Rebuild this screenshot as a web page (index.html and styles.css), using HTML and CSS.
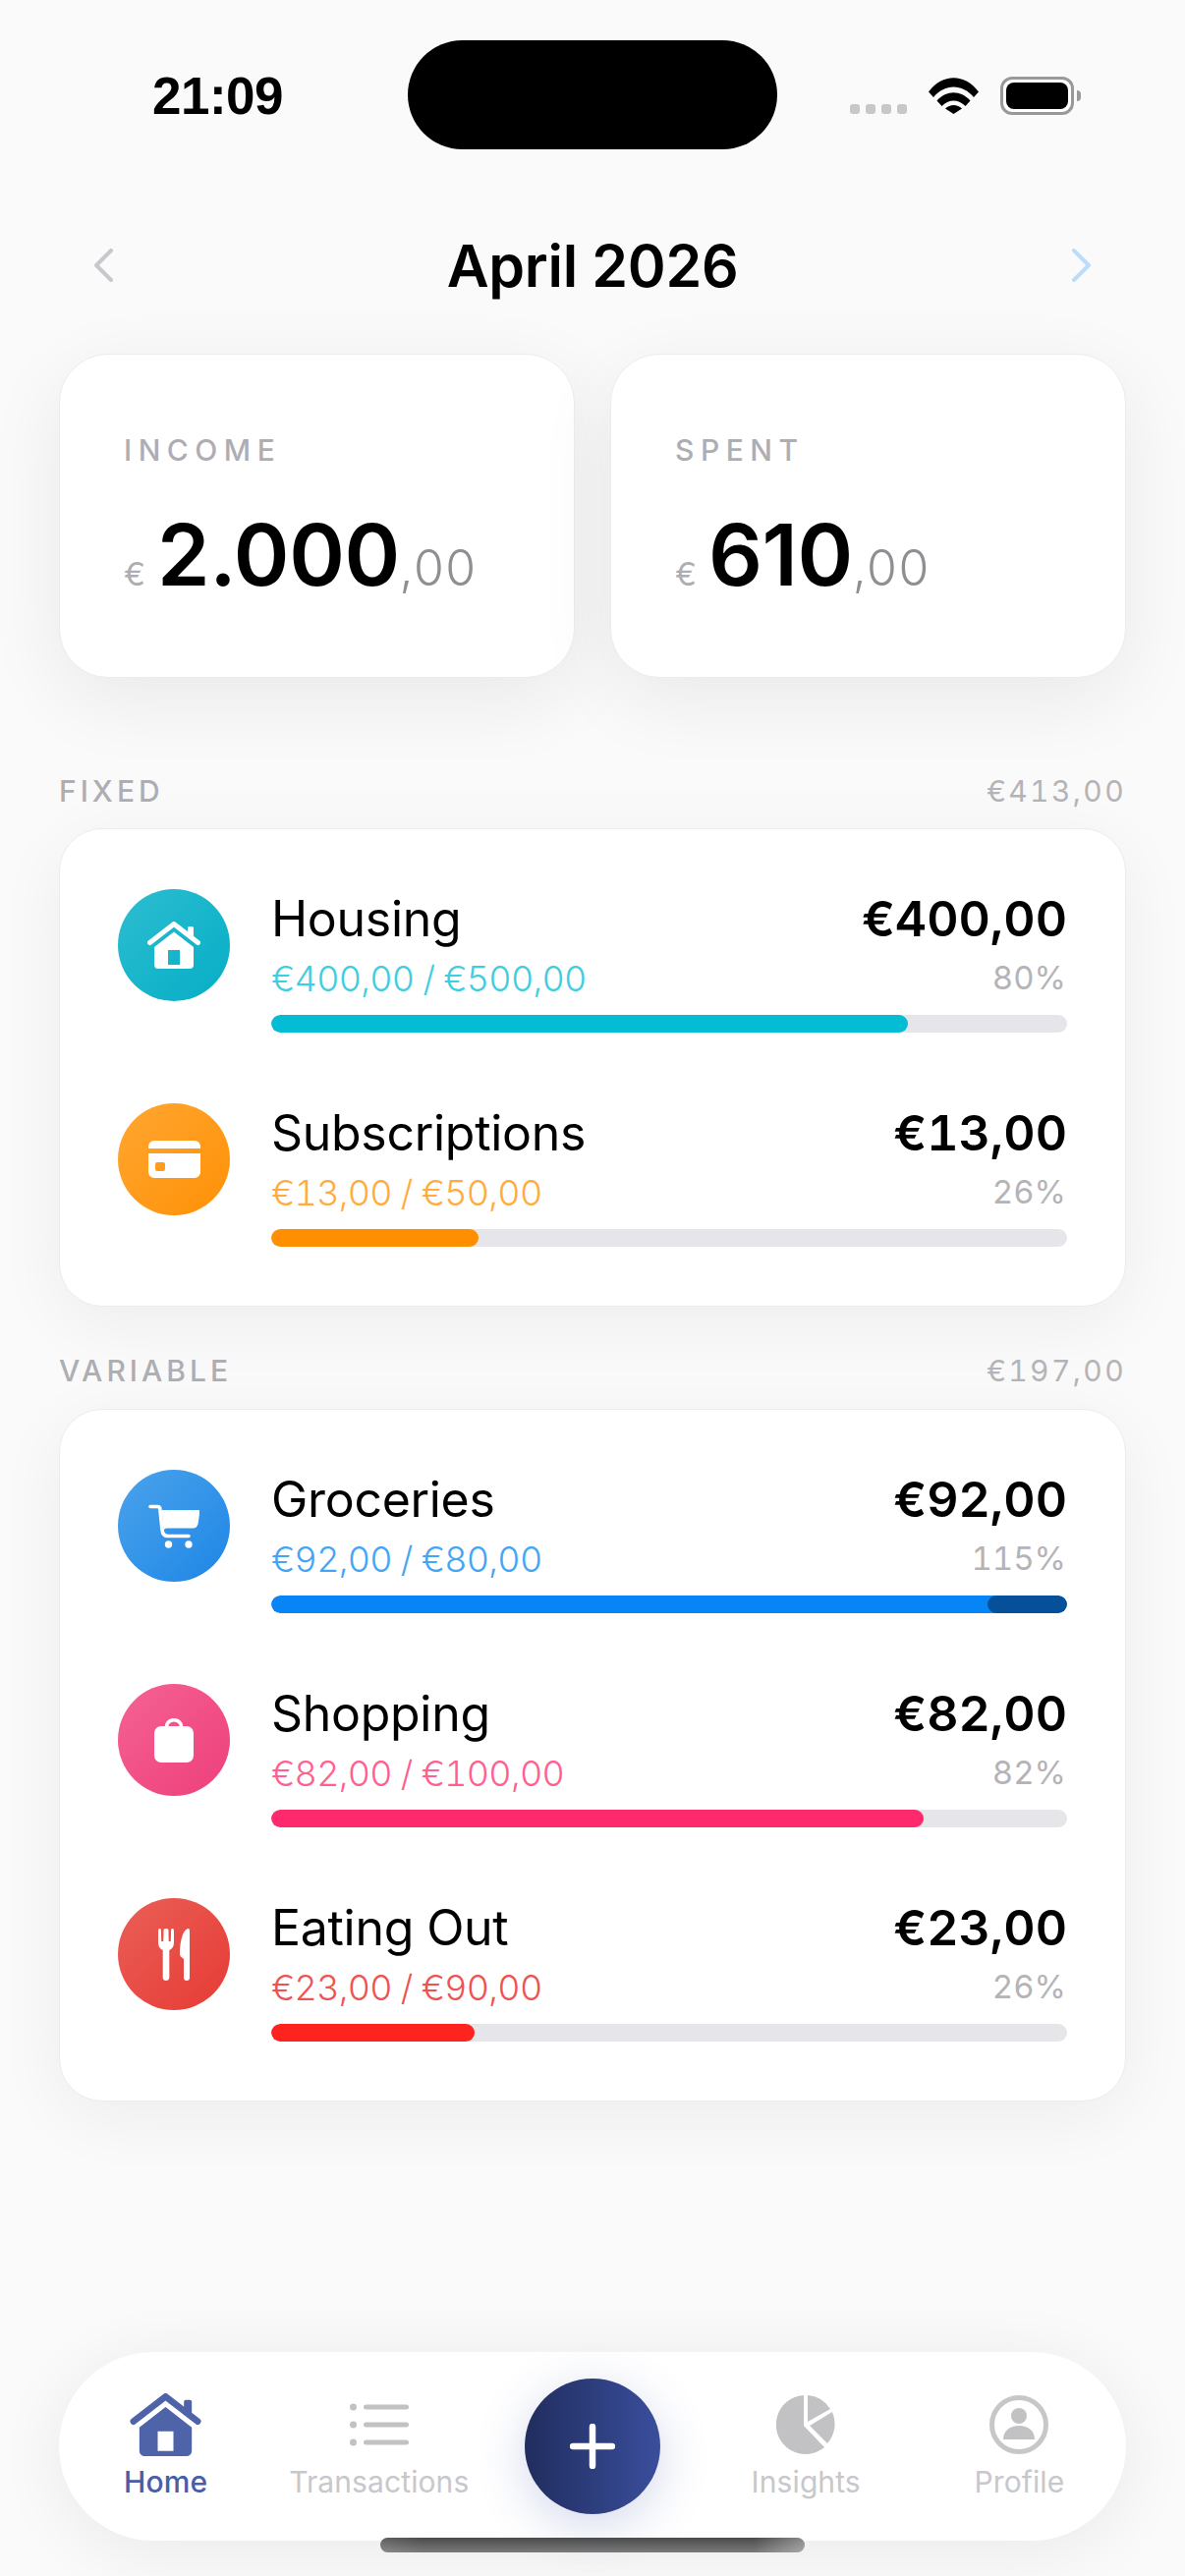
FILE: index.html
```html
<!DOCTYPE html>
<html>
<head>
    <meta charset="UTF-8">
    <title>Budget</title>
    <link rel="stylesheet" href="styles.css">
</head>
<body>
<div class="screen">
    <svg class="defs" width="0" height="0">
        <defs>
            <g id="house">
                <rect x="71" y="38" width="6" height="12" rx="1.500"/>
                <path class="roof" d="M32.500 54.500 L57 35.500 L81.500 54.500"/>
                <path fill-rule="evenodd" d="M37 59 L57 43.500 L77 59 V77 a4 4 0 0 1-4 4 H41 a4 4 0 0 1-4-4 Z M51 62 V77 H63 V62 Z"/>
            </g>
        </defs>
    </svg>

    <!-- status bar -->
    <div class="status">
        <div class="time">21:09</div>
        <div class="island"></div>
        <div class="status-icons">
            <div class="signal"><span></span><span></span><span></span><span></span></div>
            <svg class="wifi" viewBox="0 0 51 37">
                <path d="M0 14.5 C14 -4.5 37 -4.5 51 14.5 L46 20 C34.5 6 16.500 6 5 20 Z"/>
                <path d="M8.500 23.500 C18 12.500 33 12.500 42.500 23.500 L37.500 29 C31 21.500 20 21.500 13.500 29 Z"/>
                <path d="M17 31.500 C22 26.800 29 26.800 34 31.500 L25.500 37 Z"/>
            </svg>
            <div class="battery"><div class="battery-fill"></div></div>
            <div class="battery-nub"></div>
        </div>
    </div>

    <!-- month switcher -->
    <div class="month">
        <svg class="chev" viewBox="0 0 19 34"><path d="M17 2 L2 17 L17 32" stroke="#c7c7cc"/></svg>
        <h1>April 2026</h1>
        <svg class="chev" viewBox="0 0 19 34"><path d="M2 2 L17 17 L2 32" stroke="#bcdcfb"/></svg>
    </div>

    <!-- totals -->
    <div class="totals">
        <div class="total-card">
            <div class="total-label">INCOME</div>
            <div class="total-value"><span class="cur">€</span><span class="big">2.000</span><span class="cents">,00</span></div>
        </div>
        <div class="total-card">
            <div class="total-label">SPENT</div>
            <div class="total-value"><span class="cur">€</span><span class="big">610</span><span class="cents">,00</span></div>
        </div>
    </div>

    <div class="section-head first">
        <span class="section-name">FIXED</span>
        <span class="section-sum">€413,00</span>
    </div>
    <div class="list-card">
        <div class="row">
            <div class="circle teal">
                <svg class="ic-house" viewBox="30 33 54 48"><use href="#house"/></svg>
            </div>
            <div class="row-body">
                <div class="line-top"><span class="name">Housing</span><span class="amount">€400,00</span></div>
                <div class="line-sub"><span class="t-teal">€400,00 / €500,00</span><span class="pct">80%</span></div>
                <div class="bar"><div class="fill f-teal" style="width:80%"></div></div>
            </div>
        </div>
        <div class="row">
            <div class="circle orange">
                <svg class="ic-card" viewBox="0 0 53 38">
                    <path d="M0 8 V6 a6 6 0 0 1 6-6 H47 a6 6 0 0 1 6 6 V8 Z"/>
                    <path fill-rule="evenodd" d="M0 13 H53 V32 a6 6 0 0 1-6 6 H6 a6 6 0 0 1-6-6 Z M9 22 a2 2 0 0 0-2 2 V29 a2 2 0 0 0 2 2 H15 a2 2 0 0 0 2-2 V24 a2 2 0 0 0-2-2 Z"/>
                </svg>
            </div>
            <div class="row-body">
                <div class="line-top"><span class="name">Subscriptions</span><span class="amount">€13,00</span></div>
                <div class="line-sub"><span class="t-orange">€13,00 / €50,00</span><span class="pct">26%</span></div>
                <div class="bar"><div class="fill f-orange" style="width:26%"></div></div>
            </div>
        </div>
    </div>

    <div class="section-head">
        <span class="section-name">VARIABLE</span>
        <span class="section-sum">€197,00</span>
    </div>
    <div class="list-card">
        <div class="row">
            <div class="circle blue">
                <svg class="ic-cart" viewBox="0 0 52 45">
                    <path class="cart-line" d="M2 2.500 H9.500 Q11.500 2.500 11.800 4.500 L14 26 Q14.500 32.500 20 32.500 H41"/>
                    <path d="M13.500 6 H51 Q52.500 6 52.300 7.500 L50.800 19 Q50 24.500 45 24.500 H19 Q16 24.500 15.600 27 Z"/>
                    <circle cx="20.500" cy="41" r="3.700"/>
                    <circle cx="41" cy="41" r="3.700"/>
                </svg>
            </div>
            <div class="row-body">
                <div class="line-top"><span class="name">Groceries</span><span class="amount">€92,00</span></div>
                <div class="line-sub"><span class="t-blue">€92,00 / €80,00</span><span class="pct">115%</span></div>
                <div class="bar"><div class="fill f-blue" style="width:100%"><div class="over" style="width:10%"></div></div></div>
            </div>
        </div>
        <div class="row">
            <div class="circle pink">
                <svg class="ic-bag" viewBox="0 0 40 45">
                    <path class="bag-handle" d="M12.500 10 V8.500 a7.500 6.800 0 0 1 15 0 V10"/>
                    <rect x="0" y="8" width="40" height="37" rx="7"/>
                </svg>
            </div>
            <div class="row-body">
                <div class="line-top"><span class="name">Shopping</span><span class="amount">€82,00</span></div>
                <div class="line-sub"><span class="t-pink">€82,00 / €100,00</span><span class="pct">82%</span></div>
                <div class="bar"><div class="fill f-pink" style="width:82%"></div></div>
            </div>
        </div>
        <div class="row">
            <div class="circle red">
                <svg class="ic-food" viewBox="0 0 32 53">
                    <path d="M1 0 Q2.300 -.5 2.800 1 L3.200 13 H5.300 L5.600 1 Q6 0 8 0 Q10 0 10.400 1 L10.700 13 H12.800 L13.200 1 Q13.700 -.5 15 0 Q15.800 .3 16 2 L16 14 Q16 20 11.300 22 V50 Q11 53 8 53 Q5 53 4.700 50 V22 Q0 20 0 14 L0 2 Q.2 .3 1 0 Z"/>
                    <path d="M32 2 V50 Q32 53 29 53 Q26 53 26 50 V31 L23 28.500 Q22 27.500 22 26 C22 14 25 1 30.500 0 Q32 0 32 2 Z"/>
                </svg>
            </div>
            <div class="row-body">
                <div class="line-top"><span class="name">Eating Out</span><span class="amount">€23,00</span></div>
                <div class="line-sub"><span class="t-red">€23,00 / €90,00</span><span class="pct">26%</span></div>
                <div class="bar"><div class="fill f-red" style="width:25.500%"></div></div>
            </div>
        </div>
    </div>

    <!-- tab bar -->
    <nav class="tabbar">
        <div class="tab active">
            <svg class="tab-icon" viewBox="30 33 54 48"><use href="#house"/></svg>
            <span>Home</span>
        </div>
        <div class="tab">
            <svg class="tab-icon" viewBox="0 0 60 64">
                <circle cx="3.500" cy="14" r="3.500"/><circle cx="3.500" cy="32" r="3.500"/><circle cx="3.500" cy="50" r="3.500"/>
                <rect x="14" y="11.500" width="46" height="5" rx="2.500"/><rect x="14" y="29.500" width="46" height="5" rx="2.500"/><rect x="14" y="47.500" width="46" height="5" rx="2.500"/>
            </svg>
            <span>Transactions</span>
        </div>
        <div class="tab-add">
            <div class="fab">
                <svg class="plus" viewBox="0 0 46 46"><path d="M23 3 V43 M3 23 H43"/></svg>
            </div>
        </div>
        <div class="tab">
            <svg class="tab-icon" viewBox="0 -2 60 64">
                <path d="M28 0 A30 30 0 1 0 49 53 L28 31 Z"/>
                <path d="M32 0 V27 L55 14 A30 30 0 0 0 32 0 Z"/>
                <path d="M34 31 L57 17 A30 30 0 0 1 52 49 Z"/>
            </svg>
            <span>Insights</span>
        </div>
        <div class="tab">
            <svg class="tab-icon" viewBox="0 -2 60 64">
                <circle class="ring" cx="30" cy="30" r="27.500"/>
                <circle cx="30" cy="21" r="8"/>
                <path d="M14 45 C14 36 21 31 30 31 C39 31 46 36 46 45 Z"/>
            </svg>
            <span>Profile</span>
        </div>
    </nav>

    <div class="home-indicator"></div>
</div>
</body>
</html>
```

FILE: styles.css
```css
* {
    box-sizing: border-box;
}
html, body {
    margin: 0;
    padding: 0;
}
body {
    background-color: #fafafa;
    font-family: Inter, "Noto Sans", sans-serif;
    font-variant-numeric: tabular-nums;
    color: #000;
}
.screen {
    position: relative;
    width: 1206px;
    height: 2622px;
    overflow: hidden;
    display: flex;
    flex-direction: column;
    padding: 41px 60px 36px;
}
.defs {
    position: absolute;
}

/* status bar */
.status {
    display: grid;
    grid-template-columns: 1fr 376px 1fr;
    grid-template-rows: 111px;
    margin: 0 -5px;
    height: 111px;
}
.time {
    font-family: "Liberation Sans", Arial, sans-serif;
    font-size: 53px;
    font-weight: 700;
    line-height: 114px;
    height: 111px;
    padding-left: 100px;
    letter-spacing: -.5px;
}
.island {
    background-color: #000;
    border-radius: 56px;
}
.status-icons {
    display: flex;
    align-items: flex-start;
    position: relative;
    padding-left: 74px;
}
.signal {
    display: flex;
    gap: 6px;
    margin-top: 65px;
    width: 80px;
}
.signal span {
    width: 10px;
    height: 10px;
    border-radius: 3px;
    background-color: #c7c7c9;
}
.wifi {
    width: 51px;
    height: 37px;
    margin-top: 38px;
    margin-left: 0;
    fill: #000;
}
.battery {
    width: 75px;
    height: 39px;
    margin-top: 37px;
    margin-left: 22px;
    border: 3px solid #999;
    border-radius: 12px;
    padding: 3px;
    background-color: #fff;
}
.battery-fill {
    height: 100%;
    background-color: #000;
    border-radius: 8px;
}
.battery-nub {
    width: 4px;
    height: 11px;
    margin-top: 51px;
    margin-left: 3px;
    background-color: #999;
    border-radius: 0 4px 4px 0;
}

/* month */
.month {
    display: flex;
    justify-content: space-between;
    align-items: center;
    padding: 0 36px;
    margin-top: 78px;
    height: 80px;
}
.month h1 {
    margin: 0;
    font-size: 59px;
    font-weight: 600;
    letter-spacing: -.3px;
    font-variant-numeric: normal;
}
.chev {
    width: 19px;
    height: 34px;
    fill: none;
    stroke-width: 4;
    stroke-linecap: round;
    stroke-linejoin: round;
}

/* income / spent cards */
.totals {
    display: grid;
    grid-template-columns: 1fr 1fr;
    gap: 36px;
    margin-top: 50px;
}
.total-card {
    height: 330px;
    background-color: #fff;
    border: 1px solid #ececee;
    border-radius: 50px;
    padding: 79px 65px 0;
    box-shadow: 0 22px 80px rgba(0, 0, 0, .07);
}
.total-label {
    font-size: 30px;
    line-height: 36px;
    font-weight: 500;
    letter-spacing: 6.500px;
    color: #aeaeb2;
}
.total-value {
    display: flex;
    align-items: baseline;
    margin-top: 39px;
    line-height: 100px;
}
.cur {
    font-size: 33px;
    color: #aeaeb2;
    margin-right: 12px;
}
.big {
    font-size: 86px;
    font-weight: 560;
    letter-spacing: -.4px;
    font-variant-numeric: normal;
}
.cents {
    font-size: 50px;
    font-weight: 300;
    color: #8e8e93;
}

/* sections */
.section-head {
    display: flex;
    justify-content: space-between;
    align-items: center;
    height: 36px;
    margin-top: 47px;
    margin-bottom: 21px;
    font-size: 30px;
}
.section-head.first {
    margin-top: 97px;
    margin-bottom: 20px;
}
.section-name {
    font-weight: 550;
    letter-spacing: 4px;
    color: #aeaeb2;
}
.section-sum {
    letter-spacing: 2.400px;
    color: #b4b4b8;
}
.list-card {
    display: flex;
    flex-direction: column;
    gap: 72px;
    background-color: #fff;
    border: 1px solid #ececee;
    border-radius: 44px;
    padding: 61px 59px 60px;
    box-shadow: 0 16px 70px rgba(0, 0, 0, .055);
}
.row {
    display: flex;
    gap: 42px;
    height: 146px;
}
.circle {
    flex: none;
    width: 114px;
    height: 114px;
    border-radius: 50%;
    display: flex;
    align-items: center;
    justify-content: center;
    fill: #fff;
}
.teal { background: linear-gradient(135deg, #2dbdd0, #05aec6); }
.orange { background: linear-gradient(135deg, #ffa732, #ff9005); }
.blue { background: linear-gradient(135deg, #4aa3ec, #1e86e6); }
.pink { background: linear-gradient(135deg, #f56292, #ee3f7c); }
.red { background: linear-gradient(135deg, #ea5f57, #e63b34); }
.ic-house { width: 54px; height: 48px; }
.ic-card { width: 53px; height: 38px; }
.ic-cart { width: 52px; height: 45px; }
.ic-bag { width: 40px; height: 45px; }
.ic-food { width: 32px; height: 53px; }
.roof {
    fill: none;
    stroke: currentColor;
    stroke-width: 5;
    stroke-linecap: round;
    stroke-linejoin: round;
}
.circle svg {
    color: #fff;
}
.cart-line {
    fill: none;
    stroke: #fff;
    stroke-width: 3.600;
    stroke-linecap: round;
}
.bag-handle {
    fill: none;
    stroke: #fff;
    stroke-width: 3.600;
}
.row-body {
    flex: 1;
    min-width: 0;
    padding-top: 2px;
}
.line-top, .line-sub {
    display: flex;
    justify-content: space-between;
}
.line-top {
    height: 56px;
    line-height: 56px;
}
.name {
    font-size: 50px;
    font-weight: 420;
    letter-spacing: -.3px;
}
.amount {
    font-size: 50px;
    font-weight: 560;
    letter-spacing: 0;
}
.line-sub {
    height: 48px;
    line-height: 48px;
    margin-top: 9px;
    font-size: 36px;
    font-weight: 300;
    letter-spacing: -.7px;
}
.pct {
    font-size: 33px;
    font-weight: 400;
    letter-spacing: 0;
    color: #b4b4b8;
    margin-top: -1px;
    margin-right: 1px;
}
.t-teal { color: #3fcde0; }
.t-orange { color: #ffab40; }
.t-blue { color: #42a5f5; }
.t-pink { color: #ff6090; }
.t-red { color: #ef5350; }
.bar {
    height: 18px;
    margin-top: 13px;
    background-color: #e5e5ea;
    border-radius: 9px;
    overflow: hidden;
}
.fill {
    height: 100%;
    border-radius: 9px;
    display: flex;
    justify-content: flex-end;
}
.f-teal { background-color: #04bcd4; }
.f-orange { background-color: #ff8f00; }
.f-blue { background-color: #0784f5; }
.f-pink { background-color: #ff2a6d; }
.f-red { background-color: #ff2320; }
.over {
    height: 100%;
    background-color: #064f99;
    border-radius: 9px;
}

/* tab bar */
.tabbar {
    margin-top: auto;
    height: 192px;
    display: grid;
    grid-template-columns: repeat(5, 1fr);
    background-color: #fff;
    border-radius: 96px;
    box-shadow: 0 10px 70px rgba(0, 0, 0, .07);
}
.tab {
    display: flex;
    flex-direction: column;
    align-items: center;
    padding-top: 42px;
    color: #c7c7cc;
    fill: #c2c2c4;
    font-size: 30px;
    font-weight: 400;
    letter-spacing: .1px;
}
.tab span {
    line-height: 36px;
    margin-top: 8px;
}
.tab-icon {
    width: 60px;
    height: 64px;
    color: #4f63a9;
}
.tab.active {
    color: #4a5da8;
    fill: #4f63a9;
    font-weight: 500;
}
.tab.active .tab-icon {
    width: 73px;
}
.ring {
    fill: none;
    stroke: #c7c7c9;
    stroke-width: 5;
}
.tab-add {
    display: flex;
    justify-content: center;
    padding-top: 27px;
}
.fab {
    width: 138px;
    height: 138px;
    border-radius: 50%;
    display: flex;
    align-items: center;
    justify-content: center;
    background: linear-gradient(90deg, #202d5e, #3a4e9c);
    box-shadow: 0 12px 50px rgba(60, 80, 170, .22);
}
.plus {
    width: 46px;
    height: 46px;
    fill: none;
    stroke: #fff;
    stroke-width: 6.500;
    stroke-linecap: round;
}
.home-indicator {
    position: absolute;
    left: 387px;
    top: 2583px;
    width: 432px;
    height: 15px;
    border-radius: 8px;
    background: linear-gradient(90deg, rgba(255, 255, 255, .12), transparent 10%, transparent 88%, rgba(255, 255, 255, .35)), linear-gradient(180deg, #4a4a4a, #7a7a7a);
}
```
